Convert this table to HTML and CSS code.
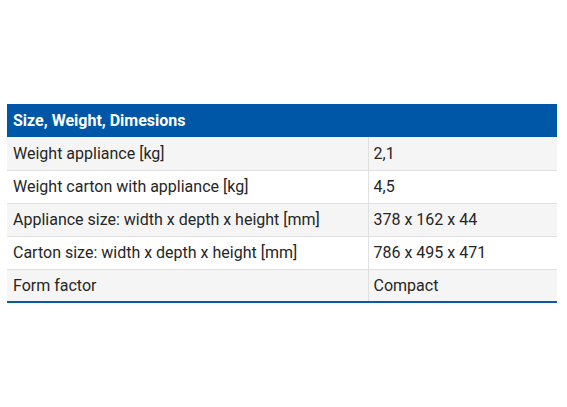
FILE: index.html
```html
<!DOCTYPE html>
<html>
<head>
<meta charset="utf-8">
<link rel="stylesheet" href="styles.css">
</head>
<body>
<div class="wrap">
<table class="spec">
  <thead>
    <tr><th colspan="2">Size, Weight, Dimesions</th></tr>
  </thead>
  <tbody>
    <tr class="odd"><td class="k">Weight appliance [kg]</td><td class="v">2,1</td></tr>
    <tr><td class="k">Weight carton with appliance [kg]</td><td class="v">4,5</td></tr>
    <tr class="odd"><td class="k">Appliance size: width x depth x height [mm]</td><td class="v">378 x 162 x 44</td></tr>
    <tr><td class="k">Carton size: width x depth x height [mm]</td><td class="v">786 x 495 x 471</td></tr>
    <tr class="odd"><td class="k">Form factor</td><td class="v">Compact</td></tr>
  </tbody>
</table>
</div>
</body>
</html>
```
FILE: styles.css
```css
html, body { margin: 0; padding: 0; background: #fff; }
.wrap { padding: 104px 0 0 7px; }
.spec {
  width: 550px;
  border-collapse: collapse;
  font-family: Roboto, "Liberation Sans", sans-serif;
  font-size: 16px;
  color: #262626;
  border-bottom: 2px solid #0a5aa8;
}
.spec th {
  background: #0057a8;
  color: #fff;
  text-align: left;
  font-weight: 700;
  height: 33px;
  padding: 0 6px;
  box-sizing: border-box;
}
.spec td {
  height: 33px;
  padding: 0 6px;
  box-sizing: border-box;
  border: 1px solid #e0e0e0;
  border-top: none;
}
.spec tr td:first-child { border-left: none; }
.spec tr td:last-child { border-right: none; }
.spec td.k { width: 361px; }
.spec td.v { padding-left: 5px; }
.spec tr.odd td { background: #f5f5f5; }
.spec tr { background: #fff; }
```
